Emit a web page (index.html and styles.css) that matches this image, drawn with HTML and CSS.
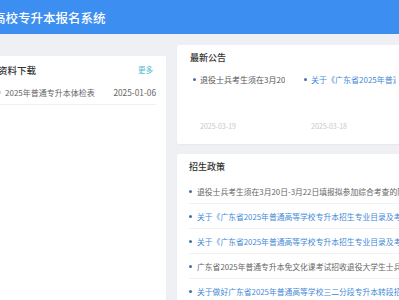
FILE: index.html
```html
<!DOCTYPE html>
<html lang="zh-CN">
<head>
  <meta charset="UTF-8" />
  <meta name="viewport" content="width=device-width, initial-scale=1.0" />
  <title>高校专升本报名系统</title>
  <link rel="stylesheet" href="styles.css">
</head>
<body>
  <div class="page">

    <div class="header">
      <h1 class="site-title">高校专升本报名系统</h1>
    </div>

    <div class="main">
      <div class="side">
        <div class="card download-card">
          <div class="card-head">
            <h3>资料下载</h3>
            <a class="more" href="#">更多</a>
          </div>
          <div class="file-row">
            <span class="dot"></span>
            <span class="file-name">2025年普通专升本体检表</span>
            <span class="file-date">2025-01-06</span>
          </div>
        </div>
      </div>

      <div class="content">
        <div class="card notice-card">
          <h3>最新公告</h3>
          <div class="notice-list">
            <div class="notice">
              <div class="notice-line">
                <span class="dot"></span>
                <span class="notice-text">退役士兵考生须在3月20日-3月22日填报拟参加综合考查的院校</span>
              </div>
              <div class="notice-date">2025-03-19</div>
            </div>
            <div class="notice">
              <div class="notice-line">
                <span class="dot"></span>
                <span class="notice-text link">关于《广东省2025年普通高等学校专升本招生专业目录及考试科目》的公告</span>
              </div>
              <div class="notice-date">2025-03-18</div>
            </div>
          </div>
        </div>

        <div class="card policy-card">
          <h3>招生政策</h3>
          <ul class="policy-list">
            <li><span class="dot"></span>退役士兵考生须在3月20日-3月22日填报拟参加综合考查的院校</li>
            <li class="link"><span class="dot"></span>关于《广东省2025年普通高等学校专升本招生专业目录及考试科目》的公告</li>
            <li class="link"><span class="dot"></span>关于《广东省2025年普通高等学校专升本招生专业目录及考试科目》的补充公告</li>
            <li><span class="dot"></span>广东省2025年普通专升本免文化课考试招收退役大学生士兵工作方案</li>
            <li class="link"><span class="dot"></span>关于做好广东省2025年普通高等学校三二分段专升本转段招生工作的通知</li>
          </ul>
        </div>
      </div>
    </div>

  </div>
</body>
</html>
```

FILE: styles.css
```css
* {
  box-sizing: border-box;
}

body {
  margin: 0;
  background: #eef0f4;
  font-family: "Noto Sans CJK SC", "Noto Sans", sans-serif;
  color: #555;
  overflow: hidden;
}

/* page is wider than the window, scrolled a little to the right */
.page {
  width: 640px;
  margin-left: -30px;
}

.header {
  height: 34px;
  background: #3c8ef1;
  display: flex;
  align-items: center;
  padding-left: 23px;
}

.site-title {
  margin: 0;
  color: #fff;
  font-size: 12.5px;
  font-weight: 500;
}

.main {
  display: flex;
  align-items: flex-start;
  gap: 11px;
  padding: 11px 0 0 18px;
}

.card {
  background: #fff;
  border-radius: 2px;
  box-shadow: 0 1px 2px rgba(0, 0, 0, 0.04);
}

h3 {
  margin: 0;
  font-size: 9px;
  font-weight: 500;
  color: #333;
  line-height: 12px;
}

.dot {
  display: inline-block;
  width: 3px;
  height: 3px;
  border-radius: 50%;
  background: #4a6fa5;
  flex-shrink: 0;
}

.link {
  color: #3f8ad8;
}

/* left column */
.side {
  width: 178px;
  margin-top: 11px;
}

.download-card {
  height: 260px;
  padding: 7px 10px 0 10px;
}

.card-head {
  display: flex;
  justify-content: space-between;
  align-items: center;
  height: 13px;
}

.card-head h3 {
  font-size: 9.5px;
}

.more {
  font-size: 7.5px;
  color: #4fb8d0;
  text-decoration: none;
  margin-right: 3px;
}

.file-row {
  display: flex;
  align-items: center;
  height: 25px;
  margin-top: 4px;
  border-bottom: 1px solid #f0f0f0;
  font-size: 8px;
  color: #666;
}

.file-row .dot {
  background: #ccc;
  margin-right: 4px;
}

.file-name {
  flex: 1;
}

.file-date {
  font-size: 8.3px;
}

/* right column */
.content {
  width: 340px;
  display: flex;
  flex-direction: column;
  gap: 10px;
}

.notice-card {
  height: 99px;
  padding: 7px 13px 0 13px;
}

.notice-list {
  display: flex;
  margin: 9px 0 0 3px;
}

.notice {
  width: 111px;
}

.notice-line {
  display: flex;
  align-items: center;
  gap: 4px;
  height: 12px;
}

.notice-text {
  width: 85px;
  overflow: hidden;
  white-space: nowrap;
  font-size: 8px;
  color: #555;
}

.notice-text.link {
  color: #3f8ad8;
}

.notice-date {
  margin: 36px 0 0 7px;
  font-size: 7px;
  color: #c8c8c8;
}

.policy-card {
  height: 180px;
  padding: 7px 13px 0 12px;
  overflow: hidden;
}

.policy-list {
  list-style: none;
  margin: 6px 0 0 0;
  padding: 0;
}

.policy-list li {
  display: flex;
  align-items: center;
  gap: 5px;
  height: 25px;
  border-bottom: 1px solid #f2f2f2;
  font-size: 7.8px;
  white-space: nowrap;
  color: #666;
}

.policy-list li.link {
  color: #3f8ad8;
}
```
